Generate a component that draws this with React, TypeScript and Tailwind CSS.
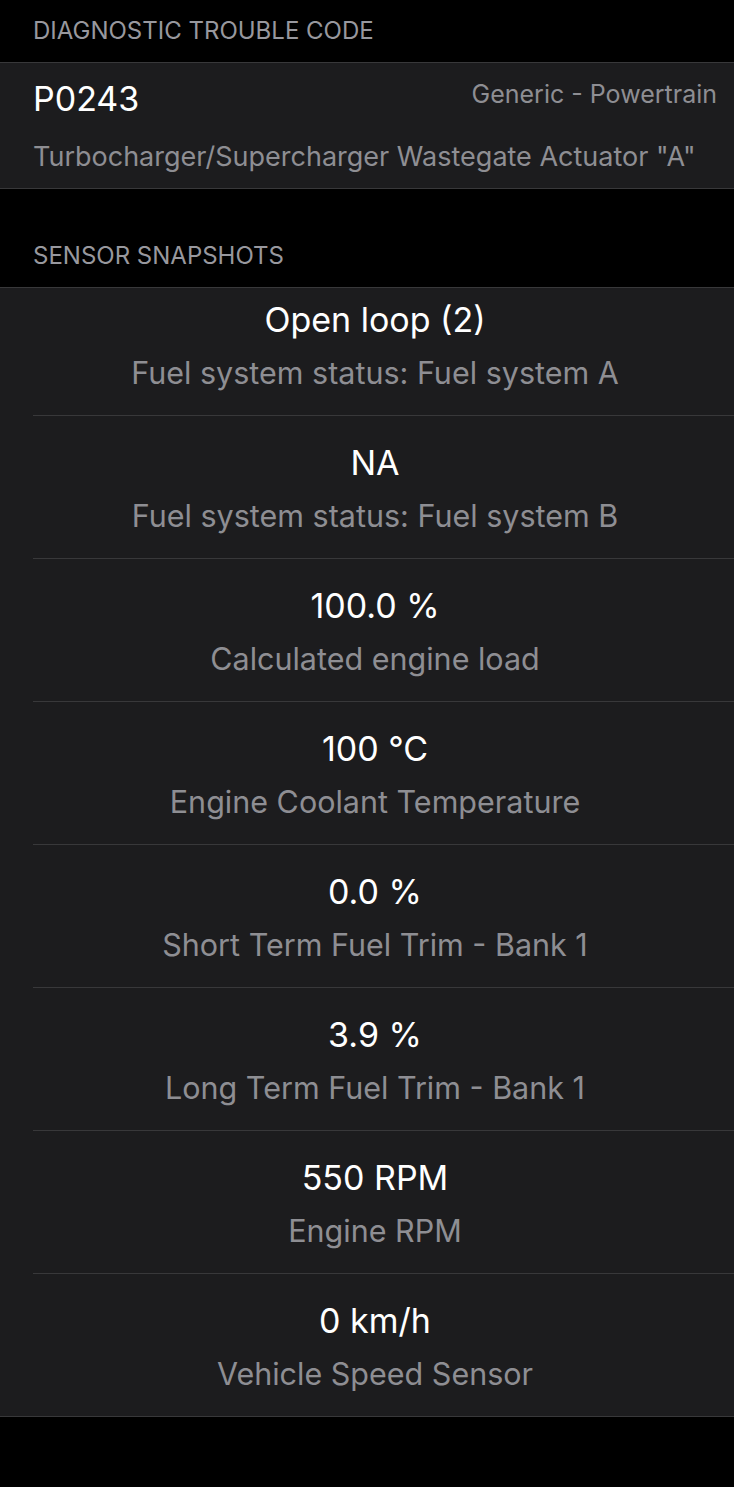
const sensors = [
  { value: 'Open loop (2)', label: 'Fuel system status: Fuel system A' },
  { value: 'NA', label: 'Fuel system status: Fuel system B' },
  { value: '100.0 %', label: 'Calculated engine load' },
  { value: '100 °C', label: 'Engine Coolant Temperature' },
  { value: '0.0 %', label: 'Short Term Fuel Trim - Bank 1' },
  { value: '3.9 %', label: 'Long Term Fuel Trim - Bank 1' },
  { value: '550 RPM', label: 'Engine RPM' },
  { value: '0 km/h', label: 'Vehicle Speed Sensor' },
];

export default function App() {
  return (
    <div
      className="min-h-screen bg-black text-white"
      style={{ fontFamily: 'Inter, "Noto Sans", sans-serif' }}
    >
      <div className="h-[62px] px-[33px] flex items-center text-[24px] text-[#98989e] uppercase">
        Diagnostic Trouble Code
      </div>

      <div className="border-y border-[#38383a] bg-[#1c1c1e] pl-[33px] pr-[17px] pt-[16px] pb-[15px]">
        <div className="flex items-start justify-between">
          <span className="text-[34px] leading-[40px]">P0243</span>
          <span className="text-[25px] leading-[30px] text-[#8e8e93]">Generic - Powertrain</span>
        </div>
        <div className="mt-[22px] text-[27px] leading-[32px] text-[#8e8e93] whitespace-nowrap">
          Turbocharger/Supercharger Wastegate Actuator "A"
        </div>
      </div>

      <div className="mt-[36px] h-[62px] px-[33px] flex items-center text-[24px] text-[#98989e] uppercase">
        Sensor Snapshots
      </div>

      <div className="border-y border-[#38383a] bg-[#1c1c1e]">
        {sensors.map((s, i) => (
          <div key={s.label} className="pl-[33px]">
            <div
              className={`pr-[17px] text-center pb-[24px] ${i === 0 ? 'pt-[12px]' : 'pt-[27px]'} ${
                i < sensors.length - 1 ? 'border-b border-[#38383a]' : ''
              }`}
            >
              <div className="text-[34px] leading-[40px]">{s.value}</div>
              <div className="mt-[15px] text-[30.5px] leading-[36px] text-[#8e8e93]">{s.label}</div>
            </div>
          </div>
        ))}
      </div>
    </div>
  );
}
